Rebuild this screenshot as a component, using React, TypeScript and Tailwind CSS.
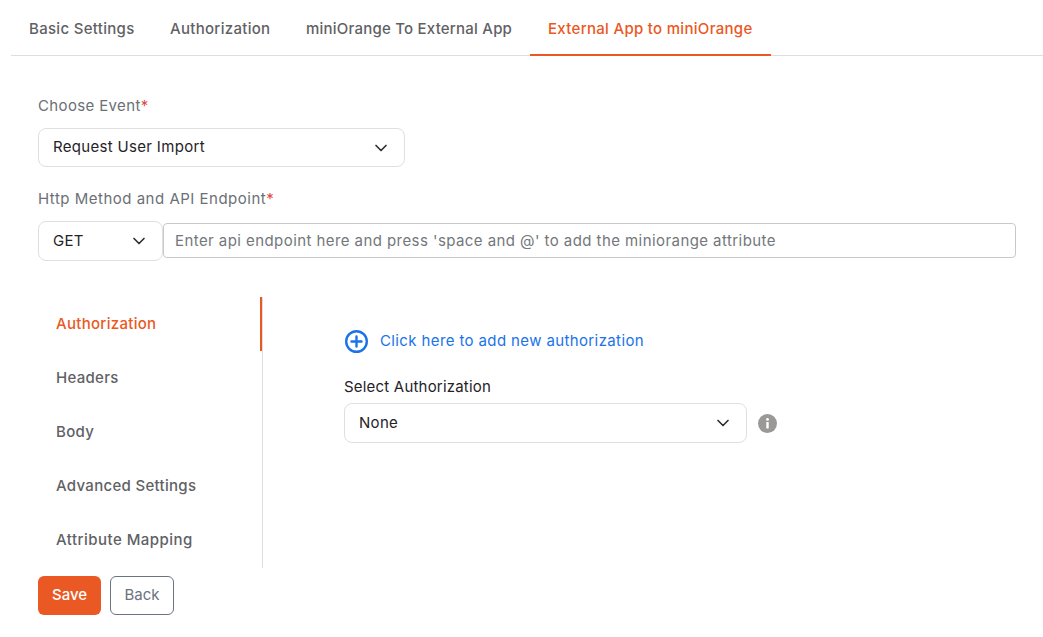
import { ChevronDown } from 'lucide-react';

const SIDE_ITEMS = [
  { label: 'Authorization', spacing: 'tracking-[0.3px]' },
  { label: 'Headers', spacing: 'tracking-[0.3px]' },
  { label: 'Body', spacing: 'tracking-[0.3px]' },
  { label: 'Advanced Settings', spacing: 'tracking-[0.3px]' },
  { label: 'Attribute Mapping', spacing: 'tracking-[0.47px]' },
];

function SelectBox({ value, className }: { value: string; className: string }) {
  return (
    <div className={`flex items-center justify-between bg-white border border-[#dfdfdf] rounded-[8px] pl-[14px] pr-[13px] text-[15px] tracking-[0.32px] text-[#1f2328] ${className}`}>
      <span>{value}</span>
      <ChevronDown size={20} strokeWidth={2} className="text-[#2b2f33]" />
    </div>
  );
}

export default function App() {
  return (
    <div className="w-[1043px] h-[637px] bg-white overflow-hidden font-['Inter',sans-serif]">
      {/* Tabs */}
      <div className="ml-[11px] h-[56px] flex border-b border-[#dedede] text-[15px] font-medium tracking-[0.3px] text-[#5f6165]">
        <div className="w-[141px] pl-[18px] pt-[18px]">Basic Settings</div>
        <div className="w-[136px] pl-[18px] pt-[18px]">Authorization</div>
        <div className="w-[242px] pl-[18px] pt-[18px] tracking-[0.22px]">miniOrange To External App</div>
        <div className="w-[241px] h-[56px] pl-[18px] pt-[18px] text-[#ea5823] border-b-2 border-[#ea5823]">External App to miniOrange</div>
      </div>

      <div className="pl-[38px]">
        <div className="mt-[40px] h-[20px] text-[15px] leading-[20px] tracking-[0.36px] text-[#6b7075]">
          Choose Event<span className="text-[#e0483e]">*</span>
        </div>
        <SelectBox value="Request User Import" className="mt-[12px] w-[367px] h-[39px]" />

        <div className="mt-[22px] h-[20px] text-[15px] leading-[20px] tracking-[0.5px] text-[#6b7075]">
          Http Method and API Endpoint<span className="text-[#e0483e]">*</span>
        </div>
        <div className="mt-[12px] flex items-start">
          <SelectBox value="GET" className="w-[125px] h-[40px]" />
          <div className="mt-[2px] w-[853px] h-[35px] border border-[#c9c9c9] rounded-[4px] pl-[11px] pt-px flex items-center text-[15px] tracking-[0.43px] text-[#73777b]">
            Enter api endpoint here and press 'space and @' to add the miniorange attribute
          </div>
        </div>

        {/* Sub navigation and panel */}
        <div className="mt-[36px] flex">
          <div className="w-[225px] h-[271px] border-r border-[#dedede] flex flex-col">
            {SIDE_ITEMS.map((item, i) => (
              <div
                key={item.label}
                className={`h-[54px] shrink-0 pl-[18px] flex items-center text-[15px] font-medium ${item.spacing} ${i === 0 ? 'text-[#ea5823] border-r-2 border-[#ea5823]' : 'text-[#5f6165]'}`}
              >
                {item.label}
              </div>
            ))}
          </div>
          <div className="pl-[81px] pt-[32px]">
            <div className="flex items-center gap-[11px] text-[15px] tracking-[0.38px] text-[#1a73e8]">
              <svg width="25" height="25" viewBox="0 0 25 25" fill="none" stroke="#1a73e8" strokeWidth="2.4" strokeLinecap="round">
                <circle cx="12.5" cy="12.5" r="10.3" />
                <path d="M12.5 7.5v10M7.5 12.5h10" />
              </svg>
              <span>Click here to add new authorization</span>
            </div>
            <div className="mt-[23px] h-[20px] text-[15px] leading-[20px] tracking-[0.2px] text-[#1f2328]">Select Authorization</div>
            <div className="mt-[6px] flex items-center gap-[11px]">
              <SelectBox value="None" className="w-[403px] h-[40px]" />
              <svg width="19" height="19" viewBox="0 0 19 19">
                <circle cx="9.5" cy="9.5" r="9.5" fill="#9b9898" />
                <rect x="8.3" y="8" width="2.4" height="6.5" rx="0.6" fill="#fff" />
                <circle cx="9.5" cy="5.4" r="1.4" fill="#fff" />
              </svg>
            </div>
          </div>
        </div>

        <div className="mt-[8px] flex gap-[9px] text-[15px]">
          <div className="w-[63px] h-[39px] rounded-[6px] bg-[#ea5823] text-white font-medium flex items-center justify-center">Save</div>
          <div className="w-[64px] h-[39px] rounded-[6px] border border-[#6b7280] text-[#6b7280] flex items-center justify-center">Back</div>
        </div>
      </div>
    </div>
  );
}
